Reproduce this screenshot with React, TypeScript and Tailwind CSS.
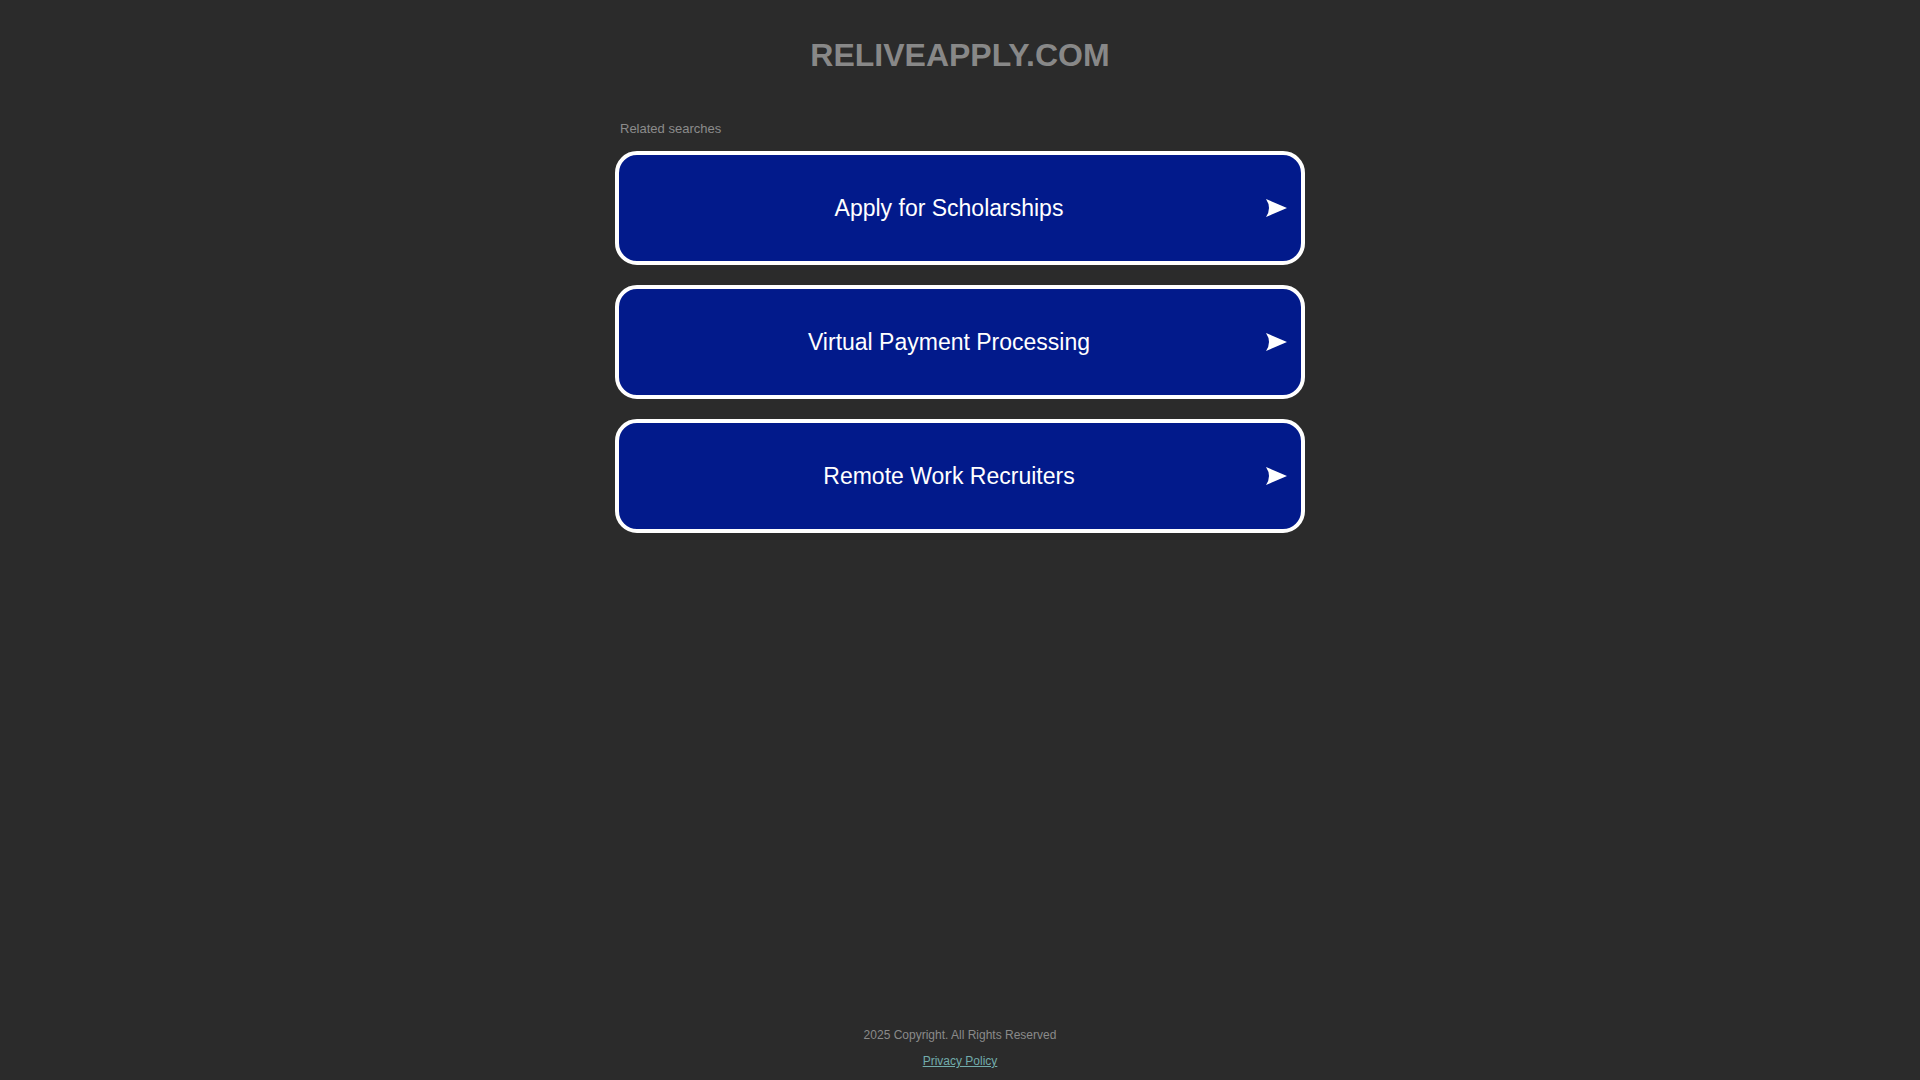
import { Fragment } from 'react';

const searches = ['Apply for Scholarships', 'Virtual Payment Processing', 'Remote Work Recruiters'];

function Arrow() {
  return (
    <svg width="21" height="18" viewBox="0 0 21 18" className="block">
      <path d="M0 0 L21 9 L0 18 Q6 9 0 0 Z" fill="#ffffff" />
    </svg>
  );
}

export default function App() {
  return (
    <div
      className="min-h-screen w-full flex flex-col bg-[#2b2b2b]"
      style={{ fontFamily: '"Liberation Sans", Arial, sans-serif' }}
    >
      {/* Domain title */}
      <h1 className="pt-[37px] text-center text-[32px] leading-[36px] font-bold text-[#888888]">
        RELIVEAPPLY.COM
      </h1>

      {/* Related searches */}
      <div className="w-[690px] mx-auto mt-[48px]">
        <div className="pl-[5px] text-[13px] leading-[15px] text-[#8b8b8b]">Related searches</div>
        <div className="mt-[15px] flex flex-col gap-[20px]">
          {searches.map((label) => (
            <Fragment key={label}>
              <a
                href="#"
                className="relative flex h-[114px] items-center rounded-[22px] border-4 border-white bg-[#021a8b] text-white"
              >
                <span className="flex-1 pr-[22px] text-center text-[23px] leading-[26px]">{label}</span>
                <span className="absolute right-[14px] top-1/2 -translate-y-1/2">
                  <Arrow />
                </span>
              </a>
            </Fragment>
          ))}
        </div>
      </div>

      {/* Footer */}
      <footer className="mt-auto pb-[12px] flex flex-col items-center gap-[12px] text-[12px] leading-[14px]">
        <div className="text-[#8a8a8a]">2025 Copyright. All Rights Reserved</div>
        <a href="#" className="text-[#72acac] underline">
          Privacy Policy
        </a>
      </footer>
    </div>
  );
}
